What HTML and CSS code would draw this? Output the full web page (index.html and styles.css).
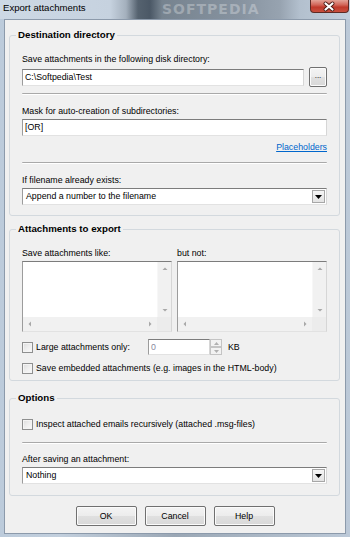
FILE: index.html
```html
<!DOCTYPE html>
<html>
<head>
<meta charset="utf-8">
<title>Export attachments</title>
<link rel="stylesheet" href="styles.css">
</head>
<body>
<div class="window">
  <div class="titlebar">
    <span class="title">Export attachments</span>
    <span class="watermark">SOFTPEDIA</span>
    <div class="close">
      <svg width="38" height="13" viewBox="0 0 38 13">
        <path d="M15.5 3.5 L22.5 9.5 M22.5 3.5 L15.5 9.5" stroke="#4a1a14" stroke-width="4" stroke-linecap="round"/>
        <path d="M15.5 3.5 L22.5 9.5 M22.5 3.5 L15.5 9.5" stroke="#ffffff" stroke-width="2.2" stroke-linecap="round"/>
      </svg>
    </div>
  </div>

  <div class="client">
    <fieldset class="group g1">
      <legend>Destination directory</legend>
      <div class="gbody">
        <div class="label first">Save attachments in the following disk directory:</div>
        <div class="row path-row">
          <div class="input grow">C:\Softpedia\Test</div>
          <div class="btn browse">...</div>
        </div>
        <div class="sep s1"></div>
        <div class="label l2">Mask for auto-creation of subdirectories:</div>
        <div class="input mask">[OR]</div>
        <div class="link">Placeholders</div>
        <div class="sep s2"></div>
        <div class="label l2">If filename already exists:</div>
        <div class="select">
          <span class="sel-text">Append a number to the filename</span>
          <span class="drop">
            <svg width="7" height="4" viewBox="0 0 7 4"><polygon points="0,0 7,0 3.5,4" fill="#000"/></svg>
          </span>
        </div>
      </div>
    </fieldset>

    <fieldset class="group g2">
      <legend>Attachments to export</legend>
      <div class="gbody">
        <div class="two first">
          <div class="label">Save attachments like:</div>
          <div class="label">but not:</div>
        </div>
        <div class="two lists">
          <div class="listbox">
            <div class="list-area"></div>
            <div class="vscroll">
              <svg width="14" height="14" viewBox="0 0 14 14"><polygon points="4.5,8 9.5,8 7,5.5" fill="#a8a8a8"/></svg>
              <svg width="14" height="14" viewBox="0 0 14 14"><polygon points="4.5,6 9.5,6 7,8.5" fill="#a8a8a8"/></svg>
            </div>
            <div class="hscroll">
              <svg width="14" height="14" viewBox="0 0 14 14"><polygon points="8,4.5 8,9.5 5.5,7" fill="#a8a8a8"/></svg>
              <svg width="14" height="14" viewBox="0 0 14 14"><polygon points="6,4.5 6,9.5 8.5,7" fill="#a8a8a8"/></svg>
            </div>
            <div class="corner"></div>
          </div>
          <div class="listbox">
            <div class="list-area"></div>
            <div class="vscroll">
              <svg width="14" height="14" viewBox="0 0 14 14"><polygon points="4.5,8 9.5,8 7,5.5" fill="#a8a8a8"/></svg>
              <svg width="14" height="14" viewBox="0 0 14 14"><polygon points="4.5,6 9.5,6 7,8.5" fill="#a8a8a8"/></svg>
            </div>
            <div class="hscroll">
              <svg width="14" height="14" viewBox="0 0 14 14"><polygon points="8,4.5 8,9.5 5.5,7" fill="#a8a8a8"/></svg>
              <svg width="14" height="14" viewBox="0 0 14 14"><polygon points="6,4.5 6,9.5 8.5,7" fill="#a8a8a8"/></svg>
            </div>
            <div class="corner"></div>
          </div>
        </div>
        <div class="check-row cr1">
          <span class="checkbox"></span>
          <span class="ck-label fixed">Large attachments only:</span>
          <div class="spin">
            <div class="spin-input">0</div>
            <div class="spin-btns">
              <span class="sb"><svg width="5" height="3" viewBox="0 0 5 3"><polygon points="0,3 5,3 2.5,0" fill="#b0b0b0"/></svg></span>
              <span class="sb"><svg width="5" height="3" viewBox="0 0 5 3"><polygon points="0,0 5,0 2.5,3" fill="#b0b0b0"/></svg></span>
            </div>
          </div>
          <span class="kb">KB</span>
        </div>
        <div class="check-row cr2">
          <span class="checkbox"></span>
          <span class="ck-label">Save embedded attachments (e.g. images in the HTML-body)</span>
        </div>
      </div>
    </fieldset>

    <fieldset class="group g3">
      <legend>Options</legend>
      <div class="gbody">
        <div class="check-row first">
          <span class="checkbox"></span>
          <span class="ck-label">Inspect attached emails recursively (attached .msg-files)</span>
        </div>
        <div class="sep s3"></div>
        <div class="label l3">After saving an attachment:</div>
        <div class="select">
          <span class="sel-text">Nothing</span>
          <span class="drop">
            <svg width="7" height="4" viewBox="0 0 7 4"><polygon points="0,0 7,0 3.5,4" fill="#000"/></svg>
          </span>
        </div>
      </div>
    </fieldset>

    <div class="buttons">
      <div class="btn push">OK</div>
      <div class="btn push">Cancel</div>
      <div class="btn push">Help</div>
    </div>
  </div>
</div>
</body>
</html>
```

FILE: styles.css
```css
* { box-sizing: border-box; }
html, body { margin: 0; padding: 0; }
body {
  width: 350px;
  height: 537px;
  overflow: hidden;
  font-family: "Liberation Sans", Arial, sans-serif;
  font-size: 8.8px;
  line-height: 12px;
  color: #000;
}

.window {
  width: 350px;
  height: 537px;
  display: flex;
  flex-direction: column;
  background: linear-gradient(to right, #bccbdb 0, #c2cfdd 60px, #9aa7b5 175px, #b0bdcb 290px, #bcc9d8 350px);
}

.titlebar {
  height: 19px;
  display: flex;
  align-items: flex-start;
  position: relative;
  overflow: hidden;
  background: linear-gradient(to right, #cdd9e5 0, #c6d2df 110px, #a4b0bd 126px, #55626f 138px, #4b5866 150px, #76838f 162px, #8793a0 240px, #97a3b0 280px, #b3c0ce 300px, #c2cfdd 350px);
}
.title {
  font-size: 9.6px;
  line-height: 14px;
  padding: 1px 0 0 3px;
  color: #000;
}
.watermark {
  position: absolute;
  left: 162px;
  top: 1px;
  font-family: "DejaVu Sans", sans-serif;
  font-weight: bold;
  font-size: 14px;
  line-height: 16px;
  letter-spacing: 1px;
  color: rgba(255, 255, 255, 0.28);
}
.close {
  margin-left: auto;
  margin-right: 1px;
  width: 39px;
  height: 13px;
  border: 1px solid #5e2a24;
  border-top: none;
  border-radius: 0 0 4px 4px;
  background: linear-gradient(to bottom, #e3a397 0, #d2675a 40%, #c0392b 60%, #c9503f 100%);
  display: flex;
  position: relative;
  z-index: 1;
}
.close svg { display: block; margin-left: -1px; }

.client {
  flex: 1;
  margin: 0 4px 3px 4px;
  border: 1px solid #8c9aab;
  background: #f0f0f0;
  display: flex;
  flex-direction: column;
  padding: 0 5px 0 4px;
}

.group {
  margin: 0;
  border: 1px solid #d3d9de;
  border-radius: 3px;
  padding: 0 12px;
  min-width: 0;
}
.group legend {
  font-weight: bold;
  font-size: 9.7px;
  line-height: 12px;
  padding: 0 2px;
  margin-left: -6px;
}
.g1 { margin-top: 9px; padding-bottom: 10px; }
.g2 { margin-top: 7px; padding-bottom: 4px; }
.g3 { margin-top: 11px; padding-bottom: 11px; }

.gbody { display: flex; flex-direction: column; }
.first { margin-top: 12px; }
.label { line-height: 12px; height: 12px; white-space: nowrap; }
.l2 { margin-top: 10px; }
.l3 { margin-top: 9px; }

.row { display: flex; align-items: center; gap: 5px; height: 20px; margin-top: 2px; }
.grow { flex: 1; }

.input {
  height: 17px;
  background: #fff;
  border: 1px solid;
  border-color: #7c7c7c #d6d6d6 #e2e2e2 #9c9c9c;
  padding: 0 2px;
  line-height: 15px;
  white-space: nowrap;
}
.mask { margin-top: 2px; }

.btn {
  border: 1px solid #707070;
  border-radius: 2px;
  background: linear-gradient(to bottom, #f4f4f4 0, #ececec 50%, #e0e0e0 51%, #d8d8d8 100%);
  box-shadow: inset 0 0 0 1px #fbfbfb;
  display: flex;
  align-items: center;
  justify-content: center;
}
.browse { width: 18px; height: 20px; font-size: 8px; padding-bottom: 2px; }

.sep {
  height: 2px;
  border-top: 1px solid #a9a9a9;
  border-bottom: 1px solid #ffffff;
  border-radius: 1px;
}
.s1 { margin-top: 6px; }
.s2 { margin-top: 9px; }
.s3 { margin-top: 10px; }

.link {
  margin-top: 5px;
  text-align: right;
  color: #0066cc;
  text-decoration: underline;
  line-height: 12px;
}

.select {
  margin-top: 2px;
  height: 17px;
  background: #fff;
  border: 1px solid;
  border-color: #7c7c7c #d6d6d6 #e2e2e2 #9c9c9c;
  display: flex;
  align-items: center;
  padding: 0 1px 0 3px;
}
.sel-text { flex: 1; line-height: 15px; white-space: nowrap; }
.drop {
  width: 13px;
  height: 13px;
  border: 1px solid #a7a7a7;
  background: linear-gradient(to bottom, #f6f6f6, #e3e3e3);
  display: flex;
  align-items: center;
  justify-content: center;
}
.drop svg { display: block; }

.two { display: grid; grid-template-columns: 150px 150px; column-gap: 5px; }
.lists { margin-top: 2px; height: 71px; }

.listbox {
  display: grid;
  grid-template-columns: 1fr 14px;
  grid-template-rows: 1fr 14px;
  border: 1px solid;
  border-color: #7c7c7c #d6d6d6 #e2e2e2 #9c9c9c;
  background: #fff;
}
.list-area { background: #fff; }
.vscroll {
  background: #f1f1f1;
  border-left: 1px solid #f7f7f7;
  display: flex;
  flex-direction: column;
  justify-content: space-between;
}
.hscroll {
  background: #f1f1f1;
  display: flex;
  justify-content: space-between;
}
.vscroll svg, .hscroll svg { display: block; }
.corner { background: #ececec; }

.check-row { display: flex; align-items: center; height: 16px; }
.cr1 { margin-top: 7px; }
.cr2 { margin-top: 5px; }
.checkbox {
  width: 11px;
  height: 11px;
  border: 1px solid #8e8f8f;
  background: linear-gradient(135deg, #dcdcdc 0, #eeeeee 50%, #fafafa 100%);
  box-shadow: inset 0 0 0 1px #f4f4f4;
  flex: none;
}
.ck-label { margin-left: 3px; white-space: nowrap; }
.fixed { width: 112px; flex: none; }

.spin { display: flex; height: 16px; }
.spin-input {
  width: 62px;
  height: 16px;
  background: #fff;
  border: 1px solid;
  border-color: #7c7c7c #d6d6d6 #e2e2e2 #9c9c9c;
  color: #8a8aa0;
  line-height: 14px;
  padding-left: 2px;
}
.spin-btns { display: flex; flex-direction: column; width: 12px; }
.sb {
  flex: 1;
  border: 1px solid #c4c4c4;
  background: #f2f2f2;
  display: flex;
  align-items: center;
  justify-content: center;
}
.sb svg { display: block; }
.kb { margin-left: 6px; }

.buttons {
  display: flex;
  justify-content: center;
  gap: 8px;
  margin-top: 10px;
  padding-left: 1px;
}
.push { width: 61px; height: 20px; }
```
